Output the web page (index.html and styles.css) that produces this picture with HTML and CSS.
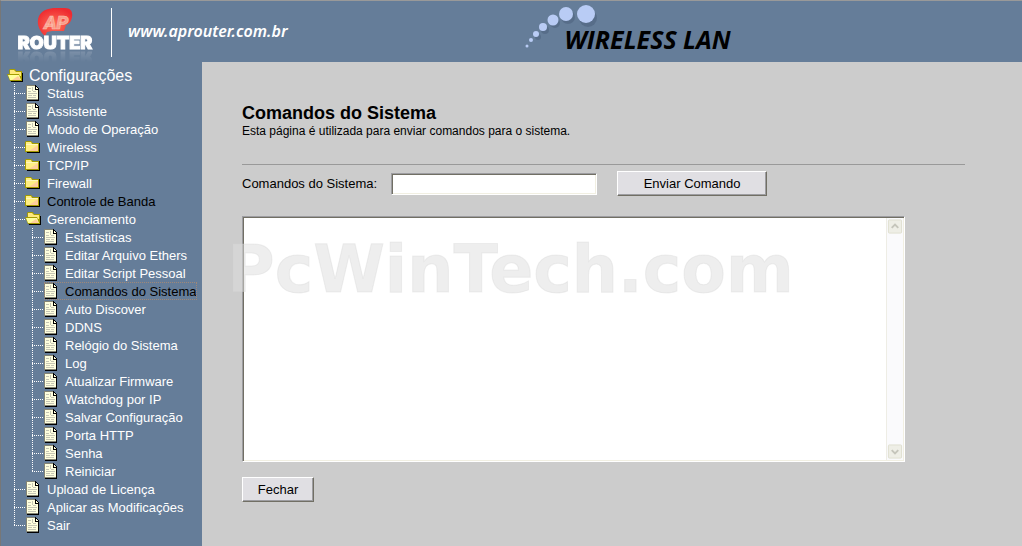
FILE: index.html
```html
<!DOCTYPE html>
<html lang="pt-br">

<head>
    <meta charset="UTF-8">
    <meta name="viewport" content="width=device-width, initial-scale=1.0">
    <title>AP Router</title>
    <link rel="stylesheet" href="styles.css">
</head>

<body>
    <svg class="sprite" aria-hidden="true">
        <symbol id="doc" viewBox="0 0 14 16">
            <g shape-rendering="crispEdges">
                <path d="M1 1h9l3 3v12H1z" fill="#000" />
                <path d="M0 0h9v4h3v11H0z" fill="#848474" />
                <path d="M1 1h8v4h3v9H1z" fill="#ffffde" />
                <path d="M9 0h1v1h1v1h1v1h1v2H9z" fill="#000" />
                <path d="M10 2h1v1h1v1h-2z" fill="#ffffde" />
                <path d="M2 3h3v1H2zM6 2h1v4H6zM2 6h3v1H2zM7 6h3v1H7zM2 8h9v1H2zM2 10h4v1H2zM7 10h3v1H7zM2 12h8v1H2z" fill="#c6c6b5" />
            </g>
        </symbol>
        <symbol id="folder" viewBox="0 0 16 14">
            <path d="M1 3h13v10H1z" fill="#000" />
            <path d="M-1 2l1-1h5l2 2h6v9H-1z" fill="#a59c00" />
            <path d="M0 2h5l1 2h6v7H0z" fill="#ffef84" />
            <path d="M3 11l9-6v6z" fill="#ffce9c" />
            <path d="M0 4.500h12" stroke="#fff7bd" />
        </symbol>
        <symbol id="open" viewBox="0 0 16 14">
            <path d="M2 4h13v9H3z" fill="#000" />
            <path d="M1 1l1-1h5l1 2h6v10H2z" fill="#a59c00" />
            <path d="M2 1h4l2 2h5v4H2z" fill="#ffe97b" />
            <path d="M-1 5h12l3 7H2z" fill="#a59c00" />
            <path d="M0 6h11l2 5H2z" fill="#ffff9c" />
            <path d="M4 11l6-4 3 4z" fill="#ffce9c" />
        </symbol>
    </svg>

    <div class="header">
        <div class="logo">
            <svg class="ap" viewBox="0 0 36 29" aria-hidden="true">
                <defs>
                    <radialGradient id="red" cx=".5" cy=".6" r=".6">
                        <stop offset="0" stop-color="#ff7058" />
                        <stop offset="1" stop-color="#ee2a30" />
                    </radialGradient>
                </defs>
                <path d="M8 28C2 23-1 15 2 8 5 2 12 0 19 0h9c6 0 8 4 7 9-1 5-3 7-6 8l-2 6H15l-5 1z" fill="url(#red)" />
                <text class="initials" x="7" y="21">AP</text>
            </svg>
            <span class="router">ROUTER</span>
        </div>
        <a class="site" href="#">www.aprouter.com.br</a>
        <div class="product">
            <svg class="bubbles" viewBox="0 0 74 50" aria-hidden="true">
                <g fill="#4f6480" opacity=".6">
                    <circle cx="63" cy="17" r="9" />
                    <circle cx="43" cy="16" r="7" />
                    <circle cx="30" cy="22" r="5" />
                    <circle cx="20" cy="29" r="4" />
                    <circle cx="13" cy="36" r="3" />
                </g>
                <g fill="#b9ccf5">
                    <circle cx="61" cy="13" r="9" />
                    <circle cx="41" cy="13" r="7" />
                    <circle cx="28" cy="19" r="5.500" />
                    <circle cx="18" cy="26" r="4" />
                    <circle cx="11" cy="33" r="3" />
                    <circle cx="6" cy="39" r="2" />
                    <circle cx="2" cy="45" r="1.500" />
                </g>
            </svg>
            <span class="lan">WIRELESS LAN</span>
        </div>
    </div>

    <div class="page">
        <div class="menu">
            <a class="root" href="#"><svg class="fold"><use href="#open" /></svg>Configurações</a>
            <ul>
                <li><a href="#"><svg><use href="#doc" /></svg>Status</a></li>
                <li><a href="#"><svg><use href="#doc" /></svg>Assistente</a></li>
                <li><a href="#"><svg><use href="#doc" /></svg>Modo de Operação</a></li>
                <li><a href="#"><svg class="fold"><use href="#folder" /></svg>Wireless</a></li>
                <li><a href="#"><svg class="fold"><use href="#folder" /></svg>TCP/IP</a></li>
                <li><a href="#"><svg class="fold"><use href="#folder" /></svg>Firewall</a></li>
                <li><a class="visited" href="#"><svg class="fold"><use href="#folder" /></svg>Controle de Banda</a></li>
                <li><a href="#"><svg class="fold"><use href="#open" /></svg>Gerenciamento</a>
                    <ul>
                        <li><a href="#"><svg><use href="#doc" /></svg>Estatísticas</a></li>
                        <li><a href="#"><svg><use href="#doc" /></svg>Editar Arquivo Ethers</a></li>
                        <li><a href="#"><svg><use href="#doc" /></svg>Editar Script Pessoal</a></li>
                        <li><a class="visited current" href="#"><svg><use href="#doc" /></svg>Comandos do Sistema</a></li>
                        <li><a href="#"><svg><use href="#doc" /></svg>Auto Discover</a></li>
                        <li><a href="#"><svg><use href="#doc" /></svg>DDNS</a></li>
                        <li><a href="#"><svg><use href="#doc" /></svg>Relógio do Sistema</a></li>
                        <li><a href="#"><svg><use href="#doc" /></svg>Log</a></li>
                        <li><a href="#"><svg><use href="#doc" /></svg>Atualizar Firmware</a></li>
                        <li><a href="#"><svg><use href="#doc" /></svg>Watchdog por IP</a></li>
                        <li><a href="#"><svg><use href="#doc" /></svg>Salvar Configuração</a></li>
                        <li><a href="#"><svg><use href="#doc" /></svg>Porta HTTP</a></li>
                        <li><a href="#"><svg><use href="#doc" /></svg>Senha</a></li>
                        <li><a href="#"><svg><use href="#doc" /></svg>Reiniciar</a></li>
                    </ul>
                </li>
                <li><a href="#"><svg><use href="#doc" /></svg>Upload de Licença</a></li>
                <li><a href="#"><svg><use href="#doc" /></svg>Aplicar as Modificações</a></li>
                <li><a href="#"><svg><use href="#doc" /></svg>Sair</a></li>
            </ul>
        </div>

        <form class="content">
            <h2>Comandos do Sistema</h2>
            <p>Esta página é utilizada para enviar comandos para o sistema.</p>
            <hr>
            <div class="row">
                <label for="cmd">Comandos do Sistema:</label>
                <input type="text" id="cmd">
                <button class="send" type="button">Enviar Comando</button>
            </div>
            <div class="output">
                <textarea aria-label="Resultado" readonly></textarea>
                <div class="scroll">
                    <svg viewBox="0 0 17 17"><rect x="1.500" y="1.500" width="14" height="14" rx="1" fill="#eeeee6" stroke="#dedecf" /><path d="M5 10l3.500-3.500L12 10" fill="none" stroke="#c5c5bb" stroke-width="2" /></svg>
                    <svg viewBox="0 0 17 17"><rect x="1.500" y="1.500" width="14" height="14" rx="1" fill="#eeeee6" stroke="#dedecf" /><path d="M5 7l3.500 3.500L12 7" fill="none" stroke="#c5c5bb" stroke-width="2" /></svg>
                </div>
                <span class="mark">PcWinTech.com</span>
            </div>
            <button class="close" type="button">Fechar</button>
        </form>
    </div>
</body>

</html>
```

FILE: styles.css
```css
* {
    margin: 0;
    padding: 0;
    box-sizing: border-box;
}

body {
    min-height: 100vh;
    display: flex;
    flex-direction: column;
    background-color: #ccc;
    font-family: "Liberation Sans", Arial, sans-serif;
    font-size: 13px;
    color: #000;
}

ul {
    list-style: none;
}

a {
    color: #fff;
    text-decoration: none;
}

.sprite {
    display: none;
}

/* header */
.header {
    display: flex;
    height: 62px;
    background-color: #657d99;
    border-top: 1px solid #999;
    border-left: 1px solid #777;
}

.logo {
    display: flex;
    flex-direction: column;
    align-items: center;
    width: 111px;
    height: 49px;
    margin-top: 7px;
    padding-right: 2px;
    border-right: 1px solid #fff;
}

.logo .ap {
    flex: none;
    width: 36px;
    height: 29px;
}

.initials {
    font-family: Roboto, sans-serif;
    font-size: 19px;
    font-weight: 900;
    font-style: italic;
    fill: #fa9c88;
    stroke: #fbc4b6;
    stroke-width: 0.5px;
}

.router {
    margin-top: -4px;
    font-family: Inter, sans-serif;
    font-size: 18px;
    font-weight: 900;
    line-height: 20px;
    color: #fff;
    -webkit-text-stroke: 1px #fff;
    -webkit-box-reflect: below -5px linear-gradient(transparent 30%, rgba(255, 255, 255, 0.2));
}

.site {
    margin-left: 16px;
    font-family: "Noto Sans", "Open Sans", sans-serif;
    font-size: 16px;
    font-weight: 600;
    font-style: italic;
    line-height: 60px;
}

.product {
    display: grid;
    margin-left: 237px;
}

.product > * {
    grid-area: 1 / 1;
}

.bubbles {
    width: 74px;
    height: 50px;
}

.lan {
    padding: 22px 0 0 40px;
    font-family: "Open Sans", sans-serif;
    font-size: 25px;
    font-weight: bold;
    font-style: italic;
    line-height: 32px;
    white-space: nowrap;
}

.page {
    flex: 1;
    display: flex;
}

/* menu */
.menu {
    flex: none;
    width: 202px;
    padding: 6px 0 0 7px;
    background-color: #657d99;
    border-left: 1px solid #777;
}

.menu a {
    display: flex;
    align-items: center;
    width: max-content;
    height: 18px;
    white-space: nowrap;
}

.menu svg {
    flex: none;
    width: 14px;
    height: 16px;
    margin-right: 7px;
    overflow: visible;
}

.menu svg.fold {
    width: 16px;
    height: 14px;
    margin-right: 5px;
}

.sprite symbol {
    overflow: visible;
}

.menu .root {
    height: 16px;
    font-size: 16px;
}

.menu ul {
    padding-left: 6px;
}

.menu li {
    padding-left: 12px;
    background:
        repeating-linear-gradient(#fff 0 1px, transparent 1px 2px) 0 0 / 1px 100% no-repeat,
        repeating-linear-gradient(90deg, #fff 0 1px, transparent 1px 2px) 0 9px / 11px 1px no-repeat;
}

.menu li:last-child {
    background-size: 1px 10px, 11px 1px;
}

.menu .visited {
    color: #000;
}

.menu .current {
    outline: 1px dotted #a08878;
    outline-offset: -1px;
}

/* content */
.content {
    flex: 1;
    padding: 40px 57px 40px 40px;
}

h2 {
    font-size: 18px;
    line-height: 22px;
}

p {
    font-size: 12px;
    line-height: 14px;
}

hr {
    margin-top: 26px;
    border: 0;
    border-top: 1px solid #999;
}

.row {
    display: flex;
    align-items: center;
    margin-top: 6px;
}

input {
    width: 206px;
    height: 22px;
    margin: 0 20px 0 14px;
    padding: 0 3px;
}

input,
.output {
    background-color: #fff;
    border: 1px solid;
    border-color: #9d9da1 #fff #fff #9d9da1;
    box-shadow: inset 1px 1px #716f64, inset -1px -1px #f1efe2;
}

button {
    height: 25px;
    background-color: #e0dfe3;
    border: 1px solid;
    border-color: #fff #716f64 #716f64 #fff;
    box-shadow: inset -1px -1px #9d9da1;
    font: inherit;
}

.send {
    width: 150px;
}

.output {
    position: relative;
    display: flex;
    max-width: 663px;
    height: 246px;
    margin-top: 20px;
    padding: 1px;
}

textarea {
    flex: 1;
    border: 0;
    outline: 0;
    resize: none;
    background: none;
}

.scroll {
    display: flex;
    flex-direction: column;
    justify-content: space-between;
    width: 17px;
    background-color: #fafafc;
    border-left: 1px solid #eeede5;
}

.scroll svg {
    width: 16px;
    height: 17px;
}

.mark {
    position: absolute;
    top: 16px;
    left: -16px;
    font-family: "DejaVu Sans", Verdana, sans-serif;
    font-size: 65px;
    font-weight: bold;
    line-height: 74px;
    color: rgba(221, 221, 221, 0.5);
    -webkit-text-stroke: 1px rgba(210, 210, 210, 0.3);
    pointer-events: none;
}

.close {
    width: 72px;
    margin-top: 15px;
}
```
